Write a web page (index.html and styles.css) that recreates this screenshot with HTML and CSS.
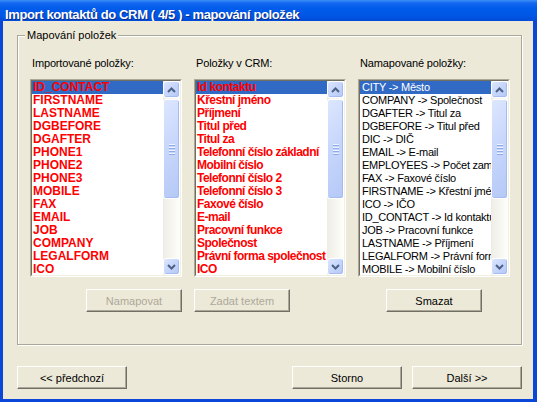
FILE: index.html
```html
<!DOCTYPE html>
<html lang="cs">
<head>
<meta charset="utf-8">
<title>Import kontaktů do CRM</title>
<link rel="stylesheet" href="styles.css">
</head>
<body>
<div class="window">
  <div class="titlebar">Import kontaktů do CRM ( 4/5 ) - mapování položek</div>
  <div class="client">
    <div class="group">
      <span class="group-title">Mapování položek</span>
      <div class="columns">
        <div class="col">
          <div class="label">Importované položky:</div>
          <div class="listbox">
            <div class="listbox-inner">
              <div class="items items-caps">
                <div class="item sel">ID_CONTACT</div>
                <div class="item">FIRSTNAME</div>
                <div class="item">LASTNAME</div>
                <div class="item">DGBEFORE</div>
                <div class="item">DGAFTER</div>
                <div class="item">PHONE1</div>
                <div class="item">PHONE2</div>
                <div class="item">PHONE3</div>
                <div class="item">MOBILE</div>
                <div class="item">FAX</div>
                <div class="item">EMAIL</div>
                <div class="item">JOB</div>
                <div class="item">COMPANY</div>
                <div class="item">LEGALFORM</div>
                <div class="item">ICO</div>
              </div>
              <div class="scrollbar">
                <div class="sb-btn"><svg width="9" height="6" viewBox="0 0 9 6"><polyline points="1,5 4.5,1.5 8,5" fill="none" stroke="#4d6185" stroke-width="2"/></svg></div>
                <div class="sb-track"><div class="sb-thumb"><span class="grip"></span><span class="grip"></span><span class="grip"></span><span class="grip"></span></div></div>
                <div class="sb-btn"><svg width="9" height="6" viewBox="0 0 9 6"><polyline points="1,1 4.5,4.5 8,1" fill="none" stroke="#4d6185" stroke-width="2"/></svg></div>
              </div>
            </div>
          </div>
          <div class="actions actions-end"><button class="btn btn-small" disabled>Namapovat</button></div>
        </div>
        <div class="col">
          <div class="label">Položky v CRM:</div>
          <div class="listbox">
            <div class="listbox-inner">
              <div class="items items-crm">
                <div class="item sel">Id kontaktu</div>
                <div class="item">Křestní jméno</div>
                <div class="item">Příjmení</div>
                <div class="item">Titul před</div>
                <div class="item">Titul za</div>
                <div class="item">Telefonní číslo základní</div>
                <div class="item">Mobilní číslo</div>
                <div class="item">Telefonní číslo 2</div>
                <div class="item">Telefonní číslo 3</div>
                <div class="item">Faxové číslo</div>
                <div class="item">E-mail</div>
                <div class="item">Pracovní funkce</div>
                <div class="item">Společnost</div>
                <div class="item">Právní forma společnost</div>
                <div class="item">IČO</div>
              </div>
              <div class="scrollbar">
                <div class="sb-btn"><svg width="9" height="6" viewBox="0 0 9 6"><polyline points="1,5 4.5,1.5 8,5" fill="none" stroke="#4d6185" stroke-width="2"/></svg></div>
                <div class="sb-track"><div class="sb-thumb"><span class="grip"></span><span class="grip"></span><span class="grip"></span><span class="grip"></span></div></div>
                <div class="sb-btn"><svg width="9" height="6" viewBox="0 0 9 6"><polyline points="1,1 4.5,4.5 8,1" fill="none" stroke="#4d6185" stroke-width="2"/></svg></div>
              </div>
            </div>
          </div>
          <div class="actions"><button class="btn btn-small" disabled>Zadat textem</button></div>
        </div>
        <div class="col">
          <div class="label">Namapované položky:</div>
          <div class="listbox">
            <div class="listbox-inner">
              <div class="items items-map">
                <div class="item sel">CITY -&gt; Město</div>
                <div class="item">COMPANY -&gt; Společnost</div>
                <div class="item">DGAFTER -&gt; Titul za</div>
                <div class="item">DGBEFORE -&gt; Titul před</div>
                <div class="item">DIC -&gt; DIČ</div>
                <div class="item">EMAIL -&gt; E-mail</div>
                <div class="item">EMPLOYEES -&gt; Počet zaměstnanců</div>
                <div class="item">FAX -&gt; Faxové číslo</div>
                <div class="item">FIRSTNAME -&gt; Křestní jméno</div>
                <div class="item">ICO -&gt; IČO</div>
                <div class="item">ID_CONTACT -&gt; Id kontaktu</div>
                <div class="item">JOB -&gt; Pracovní funkce</div>
                <div class="item">LASTNAME -&gt; Příjmení</div>
                <div class="item">LEGALFORM -&gt; Právní forma</div>
                <div class="item">MOBILE -&gt; Mobilní číslo</div>
              </div>
              <div class="scrollbar">
                <div class="sb-btn"><svg width="9" height="6" viewBox="0 0 9 6"><polyline points="1,5 4.5,1.5 8,5" fill="none" stroke="#4d6185" stroke-width="2"/></svg></div>
                <div class="sb-track"><div class="sb-thumb"><span class="grip"></span><span class="grip"></span><span class="grip"></span><span class="grip"></span></div></div>
                <div class="sb-btn"><svg width="9" height="6" viewBox="0 0 9 6"><polyline points="1,1 4.5,4.5 8,1" fill="none" stroke="#4d6185" stroke-width="2"/></svg></div>
              </div>
            </div>
          </div>
          <div class="actions actions-center"><button class="btn btn-small">Smazat</button></div>
        </div>
      </div>
    </div>
    <div class="footer">
      <button class="btn btn-wide">&lt;&lt; předchozí</button>
      <div class="footer-right">
        <button class="btn btn-wide">Storno</button>
        <button class="btn btn-wide">Další &gt;&gt;</button>
      </div>
    </div>
  </div>
</div>
</body>
</html>
```
FILE: styles.css
```css
html, body {
  margin: 0;
  padding: 0;
  background: #ffffff;
}

body {
  font-family: "Liberation Sans", Arial, sans-serif;
  font-size: 11px;
  color: #000;
}

.window {
  width: 537px;
  height: 402px;
  box-sizing: border-box;
  display: flex;
  flex-direction: column;
  background: #0a46d8;
  padding: 0 4px 3px 3px;
}

.titlebar {
  height: 21px;
  box-sizing: border-box;
  margin: 0 -4px 0 -3px;
  padding: 7px 0 0 5px;
  line-height: 15px;
  font-size: 13px;
  font-weight: bold;
  letter-spacing: -0.38px;
  color: #fff;
  white-space: nowrap;
  overflow: hidden;
  text-shadow: 1px 1px 0 #0c2d8a;
  background: linear-gradient(to bottom, #3d8ef8 0, #1468f0 3px, #005ceb 40%, #0056e5 75%, #004ad6 100%);
}

.client {
  flex: 1;
  background: #ece9d8;
  padding: 14px 11px 10px 14px;
  display: flex;
  flex-direction: column;
}

.group {
  position: relative;
  height: 310px;
  box-sizing: border-box;
  border: 1px solid #aca899;
  box-shadow: 1px 1px 0 #fff, inset 1px 1px 0 #fff;
  padding: 21px 11px 32px 12px;
}

.group-title {
  position: absolute;
  top: -7px;
  left: 7px;
  padding: 0 2px;
  background: #ece9d8;
  line-height: 13px;
  font-size: 11px;
}

.columns {
  display: grid;
  grid-template-columns: 152px 152px 152px;
  column-gap: 12px;
}

.col {
  display: flex;
  flex-direction: column;
}

.label {
  height: 13px;
  line-height: 13px;
  padding-left: 2px;
  margin-bottom: 9px;
  letter-spacing: -0.15px;
  white-space: nowrap;
}

.listbox {
  height: 198px;
  box-sizing: border-box;
  border: 1px solid;
  border-color: #aca899 #fff #fff #aca899;
}

.listbox-inner {
  height: 100%;
  box-sizing: border-box;
  border: 1px solid;
  border-color: #716f64 #f1efe2 #f1efe2 #716f64;
  background: #fff;
  display: flex;
  overflow: hidden;
}

.items {
  flex: 1;
  min-width: 0;
  overflow: hidden;
}

.item {
  height: 13px;
  line-height: 13px;
  padding-left: 1px;
  white-space: nowrap;
  overflow: hidden;
}

.items-caps .item,
.items-crm .item {
  color: #ff0000;
  font-weight: bold;
  font-size: 12px;
}

.items-crm .item {
  letter-spacing: -0.5px;
}

.items-map .item {
  font-size: 11px;
  letter-spacing: -0.25px;
  padding-left: 2px;
}

.item.sel {
  background: #316ac5;
}

.items-map .item.sel {
  color: #fff;
}

.scrollbar {
  width: 17px;
  display: flex;
  flex-direction: column;
  background: linear-gradient(to right, #eeede5, #fefefb);
}

.sb-btn,
.sb-thumb {
  box-sizing: border-box;
  border: 1px solid #fff;
  border-radius: 3px;
  background: linear-gradient(135deg, #dce6fe 0%, #c6d5fb 50%, #b5c9f6 100%);
  box-shadow: inset -1px -1px 0 #a6bbef;
}

.sb-btn {
  height: 17px;
  display: flex;
  align-items: center;
  justify-content: center;
}

.sb-track {
  flex: 1;
  padding-top: 1px;
}

.sb-thumb {
  height: 100px;
  display: flex;
  flex-direction: column;
  align-items: center;
  justify-content: center;
  gap: 1px;
}

.grip {
  display: block;
  width: 6px;
  height: 1px;
  background: #8faaea;
  box-shadow: 0 -1px 0 #eef3fe;
  margin-top: 1px;
}

.actions {
  margin-top: 12px;
  display: flex;
}

.actions-end {
  justify-content: flex-end;
}

.actions-center {
  justify-content: center;
}

.btn {
  height: 23px;
  box-sizing: border-box;
  font-family: "Liberation Sans", Arial, sans-serif;
  font-size: 11px;
  color: #000;
  background: #ece9d8;
  border: 1px solid;
  border-color: #fff #716f64 #716f64 #fff;
  box-shadow: inset -1px -1px 0 #aca899;
  padding: 0;
  border-radius: 0;
}

.btn:disabled {
  color: #aca899;
}

.btn-small {
  width: 96px;
}

.btn-wide {
  width: 110px;
}

.footer {
  margin-top: 21px;
  display: flex;
  justify-content: space-between;
}

.footer-right {
  display: flex;
  gap: 10px;
}
```
